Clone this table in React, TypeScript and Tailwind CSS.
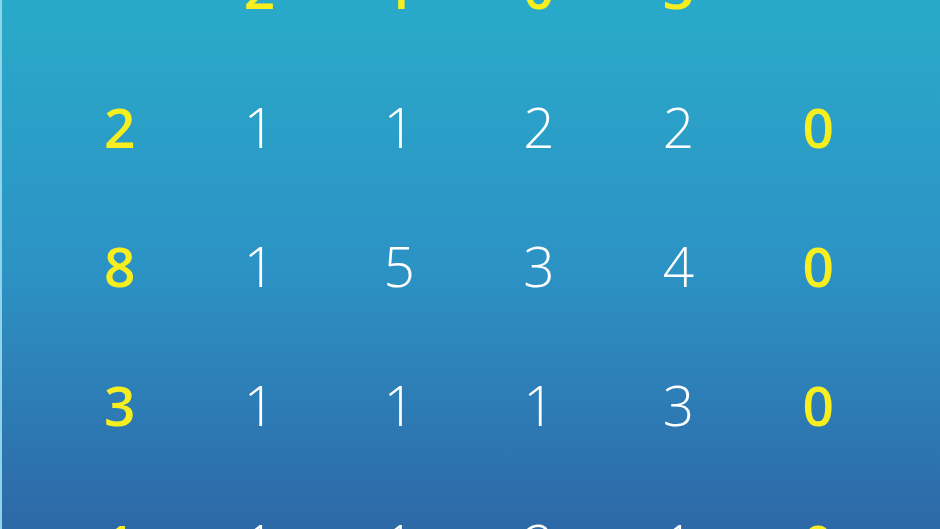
import React from 'react';

type Cell = { v: string; hi?: boolean } | null;

const rows: Cell[][] = [
  [null, { v: '2', hi: true }, { v: '1', hi: true }, { v: '0', hi: true }, { v: '3', hi: true }, null],
  [{ v: '2', hi: true }, { v: '1' }, { v: '1' }, { v: '2' }, { v: '2' }, { v: '0', hi: true }],
  [{ v: '8', hi: true }, { v: '1' }, { v: '5' }, { v: '3' }, { v: '4' }, { v: '0', hi: true }],
  [{ v: '3', hi: true }, { v: '1' }, { v: '1' }, { v: '1' }, { v: '3' }, { v: '0', hi: true }],
  [{ v: '1', hi: true }, { v: '1' }, { v: '1' }, { v: '2' }, { v: '1' }, { v: '0', hi: true }],
];

export default function App() {
  return (
    <div
      className="h-[529px] w-full overflow-hidden border-l-2 border-[#8fd3ea] bg-gradient-to-b from-[#29aac9] via-[#2c93c5] to-[#2d68a7]"
      style={{ fontFamily: '"Open Sans", "Noto Sans", sans-serif' }}
    >
      <div className="-mt-[82px] ml-[48px] w-[838px]">
        {rows.map((row, i) => (
          <div key={i} className="grid h-[139px] grid-cols-6">
            {row.map((c, j) => (
              <div key={j} className="flex items-center justify-center">
                {c && (
                  <span
                    className={
                      c.hi
                        ? 'text-[55px] font-semibold leading-none text-[#f7ee1f]'
                        : 'text-[55px] font-light leading-none text-white'
                    }
                  >
                    {c.v}
                  </span>
                )}
              </div>
            ))}
          </div>
        ))}
      </div>
    </div>
  );
}
